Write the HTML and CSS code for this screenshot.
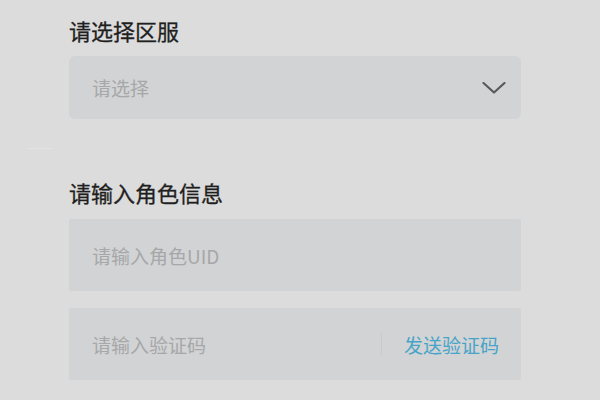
FILE: index.html
```html
<!DOCTYPE html>
<html lang="zh-CN">
<head>
<meta charset="utf-8">
<title>表单</title>
<link rel="stylesheet" href="styles.css">
</head>
<body>
<div class="page">
  <section class="group group-server">
    <h2 class="label">请选择区服</h2>
    <div class="field field-select">
      <span class="placeholder">请选择</span>
      <svg class="chevron" width="24" height="12" viewBox="0 0 24 12" aria-hidden="true">
        <polyline points="1.5,1 12,10.5 22.5,1" fill="none" stroke="#58595b" stroke-width="2.2" stroke-linecap="round" stroke-linejoin="round"/>
      </svg>
    </div>
  </section>
  <div class="rule"></div>
  <section class="group group-role">
    <h2 class="label">请输入角色信息</h2>
    <div class="field field-input">
      <span class="placeholder">请输入角色UID</span>
    </div>
    <div class="field field-input field-code">
      <span class="placeholder">请输入验证码</span>
      <span class="send-wrap">
        <span class="vdivider"></span>
        <span class="send">发送验证码</span>
      </span>
    </div>
  </section>
</div>
</body>
</html>
```

FILE: styles.css
```css
html, body {
  margin: 0;
  padding: 0;
  background: #dcdcdc;
}
body {
  font-family: "Noto Sans CJK SC", "Noto Sans", sans-serif;
  width: 600px;
  height: 400px;
  overflow: hidden;
}
.page {
  display: flex;
  flex-direction: column;
  padding-top: 15px;
}
.group {
  display: flex;
  flex-direction: column;
  margin-left: 69px;
  width: 452px;
}
.label {
  margin: 0;
  font-size: 22px;
  line-height: 30px;
  font-weight: 400;
  color: #1f1f1f;
  -webkit-text-stroke: 0.3px #1f1f1f;
}
.field {
  display: flex;
  align-items: center;
  box-sizing: border-box;
  background: #d2d3d4;
  padding: 0 22px 0 23px;
}
.placeholder {
  font-size: 19px;
  color: #a6a7a9;
  flex: 1;
}
.field-select {
  margin-top: 11px;
  height: 63px;
  border-radius: 6px;
  padding-right: 15px;
}
.chevron {
  display: block;
}
.rule {
  margin: 29px 0 0 28px;
  width: 24px;
  height: 1px;
  background: #e3e3e3;
}
.group-role {
  margin-top: 28px;
}
.field-input {
  height: 72px;
  border-radius: 2px;
  margin-top: 12px;
}
.field-code {
  margin-top: 17px;
}
.send-wrap {
  display: flex;
  align-items: center;
  gap: 22px;
}
.vdivider {
  width: 1px;
  height: 22px;
  background: #c9cacb;
}
.send {
  font-size: 19px;
  color: #47a4c8;
}
```
